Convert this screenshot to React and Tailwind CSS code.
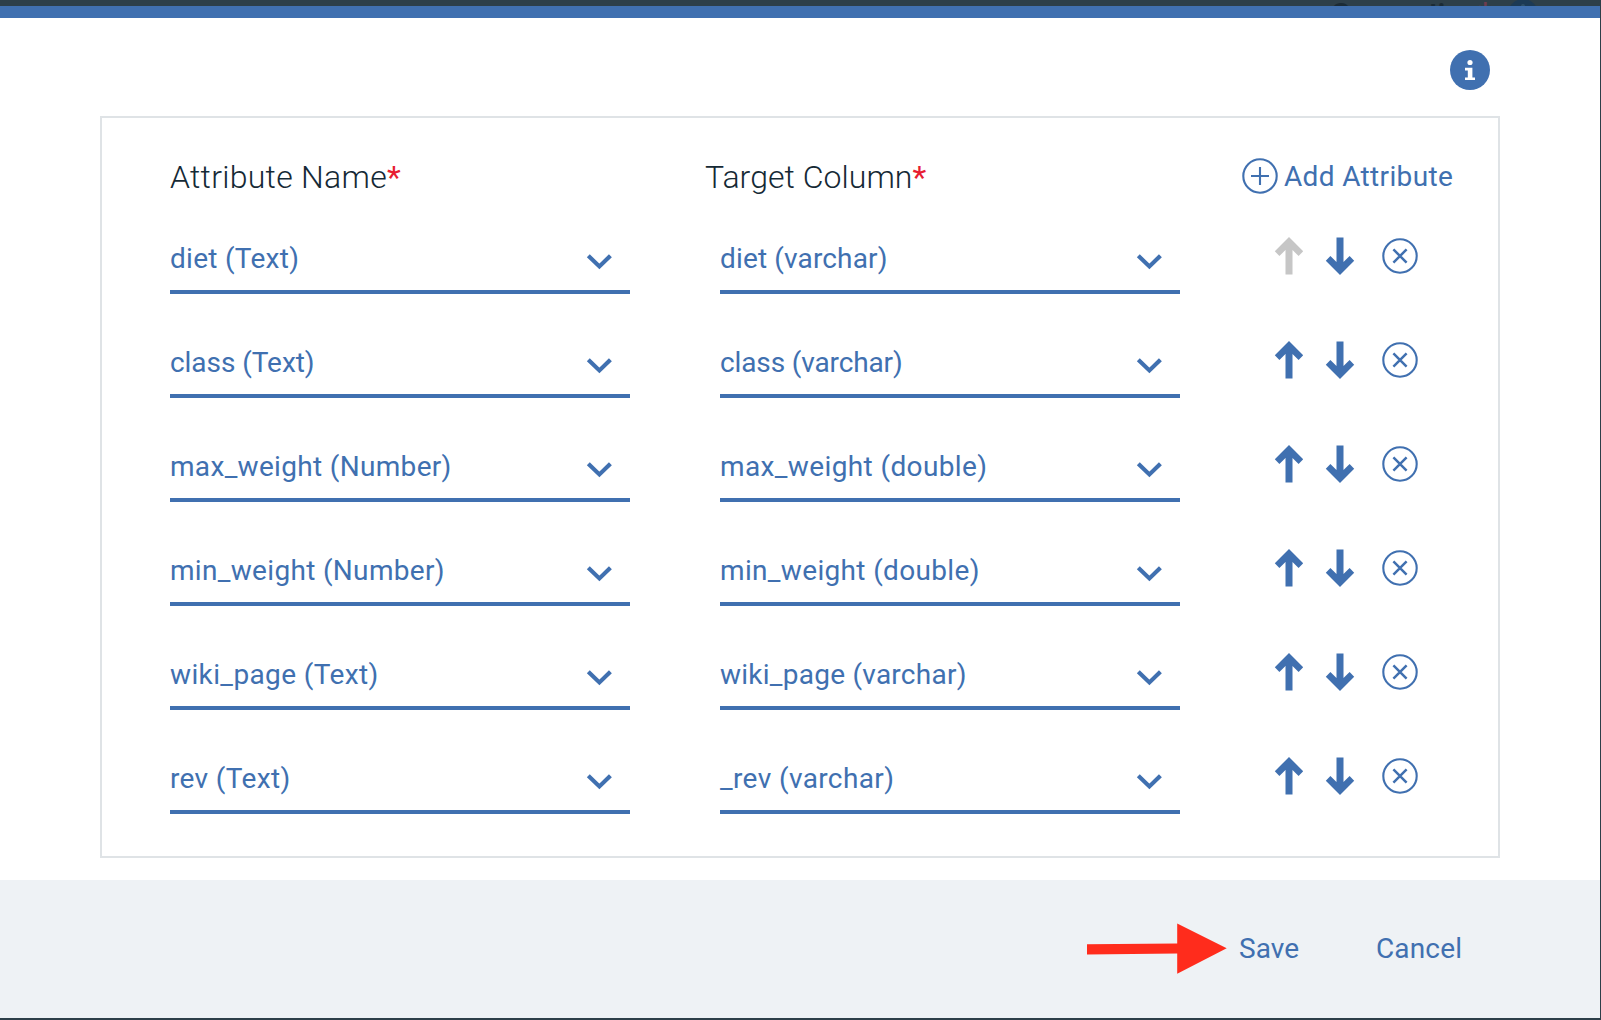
import React from "react";

const rows = [
  [["diet (Text)", "tracking-[0.28px]"], ["diet (varchar)", "tracking-[0.15px]"]],
  [["class (Text)", "tracking-[-0.05px]"], ["class (varchar)", "tracking-[-0.13px]"]],
  [["max_weight (Number)", "tracking-[0.32px]"], ["max_weight (double)", "tracking-[0.38px]"]],
  [["min_weight (Number)", "tracking-[0.32px]"], ["min_weight (double)", "tracking-[0.34px]"]],
  [["wiki_page (Text)", "tracking-[0.38px]"], ["wiki_page (varchar)", "tracking-[0.25px]"]],
  [["rev (Text)", "tracking-[0.35px]"], ["_rev (varchar)", "tracking-[0.38px]"]],
];

function Select({ label, tracking }) {
  return (
    <button className="flex h-[70px] w-[460px] items-start justify-between border-b-4 border-[#4070b0] text-left">
      <span className={`mt-[17px] whitespace-nowrap text-[28px] leading-9 ${tracking}`}>{label}</span>
      <svg className="mt-[30px] mr-[18px] h-4 w-[26px]" viewBox="0 0 26 16" fill="none" stroke="currentColor" strokeWidth="4.2">
        <path d="M2.3 1.8 13.4 12.4 24.4 1.8" />
      </svg>
    </button>
  );
}

function Arrow({ down, disabled }) {
  return (
    <svg
      className={`h-[38px] w-[30px] ${down ? "rotate-180" : ""} ${disabled ? "text-[#c6c6c6]" : ""}`}
      viewBox="0 0 30 38"
      fill="currentColor"
    >
      <path d="M15 0 29.2 14.2 24.6 19 18.5 13V37.4H11.5V13L5.4 19 .8 14.2Z" />
    </svg>
  );
}

function CircleIcon({ cross }) {
  return (
    <svg className="h-9 w-9" viewBox="0 0 36 36" fill="none" stroke="currentColor" strokeWidth="2.1">
      <circle cx="18" cy="18" r="16.7" />
      {cross ? <path strokeWidth="2.5" d="m11.4 11.4 13.2 13.2m0-13.2L11.4 24.6" /> : <path d="M9 18h18M18 9v18" />}
    </svg>
  );
}

function HeaderCell({ label, className }) {
  return (
    <div className={`mt-[37px] shrink-0 whitespace-nowrap text-[32px] leading-[44px] font-light text-[#152935] ${className}`}>
      {label}
      <span className="font-normal text-[#e71d32]">*</span>
    </div>
  );
}

export default function App() {
  return (
    <div className="h-[1020px] w-[1601px] overflow-hidden bg-[#2d3f49] pr-px pb-0.5 font-[Roboto,sans-serif] text-[#4070b0]">
      <div className="flex h-[6px] items-start overflow-hidden text-[32px] font-medium leading-none text-[#1b2b35]">
        <span className="-mt-[2px] ml-[1330px] w-[148px] shrink-0 tracking-[-1.7px]">Connection</span>
        <span className="-mt-[3px] w-[15px] shrink-0 text-[#6e3c50]">*</span>
        <svg className="mt-[-1px] ml-[15px] h-[30px] w-[30px] shrink-0" viewBox="0 0 30 30">
          <circle cx="15" cy="15" r="15" fill="#1c3a55" />
          <circle cx="15" cy="7" r="2" fill="#2d4f68" />
        </svg>
      </div>
      <div className="flex h-[1012px] flex-col border-t-12 border-[#4070b0] bg-white">
        <div className="flex h-[98px] justify-end pt-8 pr-[110px]">
          <svg className="h-10 w-10" viewBox="0 0 40 40">
            <circle cx="20" cy="20" r="20" fill="currentColor" />
            <circle cx="20" cy="12.5" r="2.6" fill="#fff" />
            <path fill="#fff" d="M15 17.8h7.4v9.6H25V30H15v-2.6h2.8V20.4H15Z" />
          </svg>
        </div>
        <div className="mx-[100px] h-[742px] border-2 border-[#dfe3e6] px-[68px]">
          <div className="flex h-[102px] items-start">
            <HeaderCell label="Attribute Name" className="w-[535px] tracking-[0.28px]" />
            <HeaderCell label="Target Column" className="w-[537px] tracking-[0.05px]" />
            <button className="mt-10 flex shrink-0 items-start gap-[6px] whitespace-nowrap text-[28px] leading-9">
              <CircleIcon />
              <span className="pt-px tracking-[0.35px]">Add Attribute</span>
            </button>
          </div>
          <div className="mt-[4px] flex flex-col gap-[34px]">
            {rows.map(([source, target], i) => (
              <div className="flex h-[70px]" key={source[0]}>
                <Select label={source[0]} tracking={source[1]} />
                <div className="w-[90px]" />
                <Select label={target[0]} tracking={target[1]} />
                <div className="ml-[94px] flex items-start pt-[13px]">
                  <Arrow disabled={i === 0} />
                  <div className="ml-[21px]"><Arrow down /></div>
                  <div className="mt-[1px] ml-[27px]"><CircleIcon cross /></div>
                </div>
              </div>
            ))}
          </div>
        </div>
        <div className="mt-auto flex h-[138px] items-start bg-[#eef2f5] pl-[1087px] text-[28px] leading-9">
          <svg className="mt-[43px] h-[52px] w-[140px]" viewBox="0 0 140 52" fill="#ff2c1c">
            <path d="M0 21.3 90.2 20.5V.6L139.7 25.2 90.2 50.8V30.5L0 31.5Z" />
          </svg>
          <button className="mt-[51px] ml-[12px] w-[137px] text-left tracking-[0.1px]">Save</button>
          <button className="mt-[51px] tracking-[0.15px]">Cancel</button>
        </div>
      </div>
    </div>
  );
}
